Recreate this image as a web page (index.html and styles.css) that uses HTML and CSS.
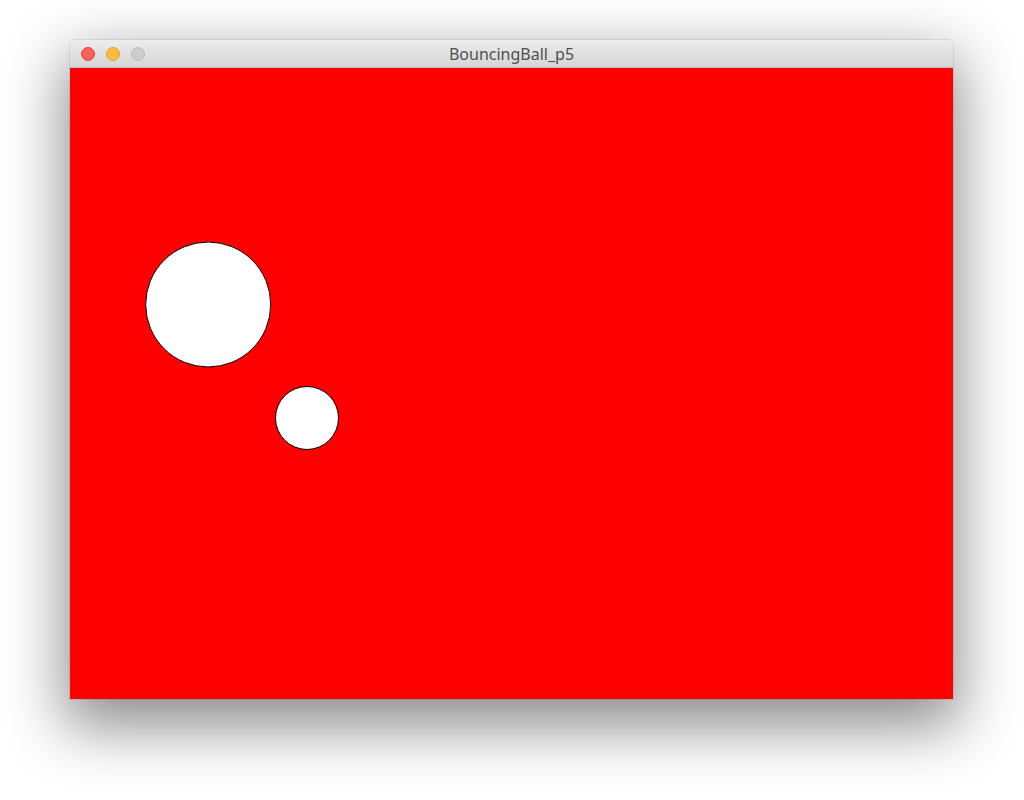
FILE: index.html
```html
<!DOCTYPE html>
<html>
<head>
<meta charset="utf-8">
<title>BouncingBall_p5</title>
<link rel="stylesheet" href="styles.css">
</head>
<body>
<div class="desktop">
  <div class="window">
    <div class="titlebar">
      <div class="lights">
        <span class="light close"></span>
        <span class="light min"></span>
        <span class="light zoom"></span>
      </div>
      <div class="title">BouncingBall_p5</div>
    </div>
    <svg class="canvas" width="883" height="631" viewBox="0 0 883 631">
      <rect width="883" height="631" fill="#ff0000"/>
      <circle cx="138.2" cy="236.5" r="62.5" fill="#fff" stroke="#000" stroke-width="1"/>
      <circle cx="237" cy="350" r="31.5" fill="#fff" stroke="#000" stroke-width="1"/>
    </svg>
  </div>
</div>
</body>
</html>
```
FILE: styles.css
```css
html, body {
  margin: 0;
  padding: 0;
  background: #ffffff;
}
.desktop {
  width: 1024px;
  height: 800px;
  padding: 40px 0 0 70px;
  box-sizing: border-box;
  display: flex;
  align-items: flex-start;
}
.window {
  width: 883px;
  display: flex;
  flex-direction: column;
  border-radius: 5px 5px 0 0;
  box-shadow: 0 22px 60px 6px rgba(0,0,0,0.45), 0 0 0 1px rgba(0,0,0,0.08);
  background: #fff;
}
.titlebar {
  position: relative;
  height: 28px;
  box-sizing: border-box;
  background: linear-gradient(#ececec, #d6d6d6);
  border-radius: 5px 5px 0 0;
  border-bottom: 1px solid #b8b8b8;
  display: flex;
  align-items: center;
  justify-content: center;
}
.lights {
  position: absolute;
  left: 11px;
  top: 7px;
  display: flex;
  gap: 11px;
}
.light {
  width: 14px;
  height: 14px;
  border-radius: 50%;
  box-sizing: border-box;
}
.close { background: #fc605c; border: 1px solid #e0443e; }
.min { background: #fdbc40; border: 1px solid #dea236; }
.zoom { background: #cdcdcd; border: 1px solid #bcbcbc; }
.title {
  font-family: "Noto Sans", "Open Sans", sans-serif;
  font-size: 16px;
  color: #505050;
  line-height: 28px;
  padding-top: 1px;
}
.canvas {
  display: block;
}
```
